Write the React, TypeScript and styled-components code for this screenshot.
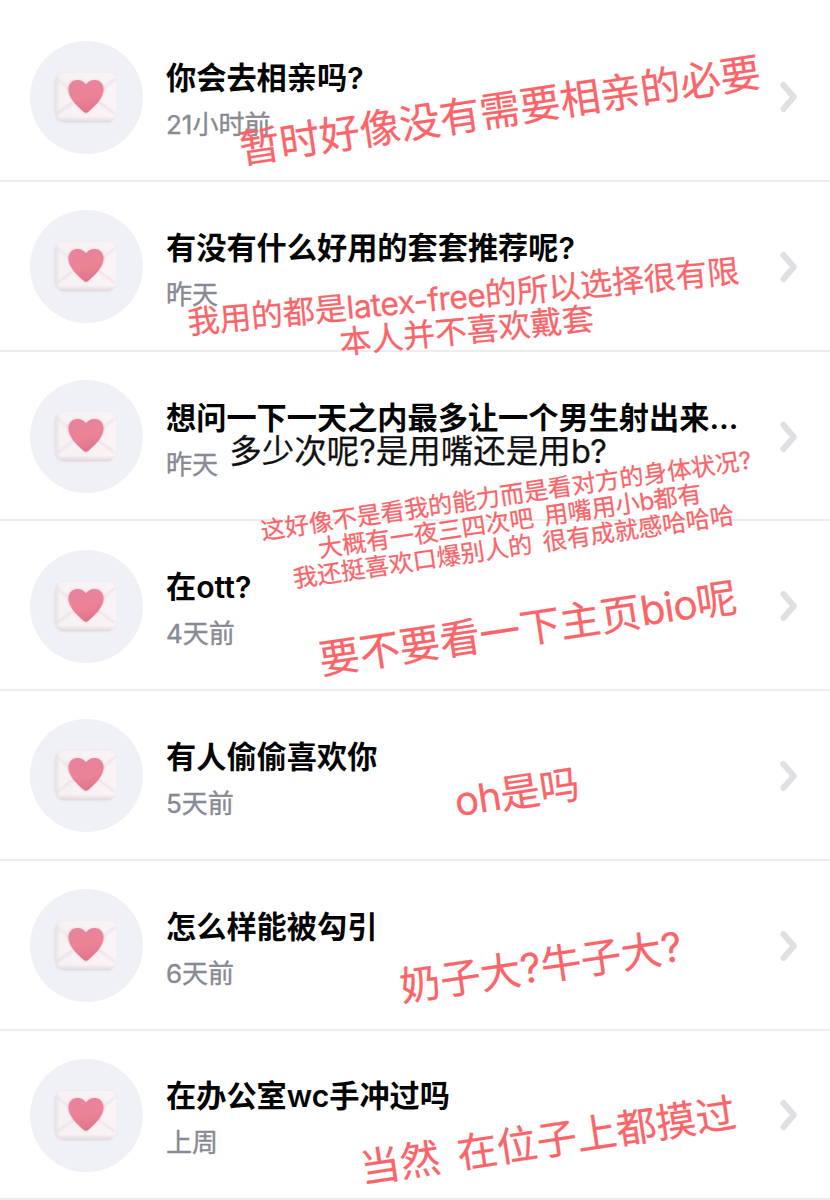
import React from "react";
import styled, { createGlobalStyle } from "styled-components";

const GlobalStyle = createGlobalStyle`
  * { box-sizing: border-box; }
  body { margin: 0; background: #fff; }
`;

const Page = styled.main`
  position: relative;
  width: 830px;
  height: 1200px;
  padding-top: 12.4px;
  overflow: hidden;
  background: #fff;
  font-family: Inter, "Noto Sans CJK SC", sans-serif;
`;

const Row = styled.article`
  display: flex;
  align-items: center;
  height: 169.7px;
  padding: 2px 30px 0 30px;
  border-bottom: 2px solid #ededef;
`;

const Avatar = styled.div`
  flex: none;
  width: 113px;
  height: 113px;
  border-radius: 50%;
  background: #eff1f6;
`;

const Copy = styled.div`
  flex: 1;
  min-width: 0;
  margin-left: 23px;
  padding-top: 9px;
`;

const Title = styled.h2`
  margin: 0;
  font-size: 30.2px;
  line-height: 46px;
  font-weight: 600;
  color: #050505;
  white-space: nowrap;
`;

const Time = styled.p`
  margin: 1px 0 0;
  font-size: 26px;
  line-height: 46px;
  color: #878a93;
  white-space: nowrap;
  -webkit-text-stroke: 0.4px #878a93;
`;

const Chevron = styled.svg`
  flex: none;
  width: 20px;
  height: 32px;
`;

const Note = styled.div<{ $x: number; $y: number; $size: number; $angle: number; $line?: number; $color?: string }>`
  position: absolute;
  left: ${(p) => p.$x}px;
  top: ${(p) => p.$y}px;
  transform: translate(-50%, -50%) rotate(${(p) => -p.$angle}deg);
  font-size: ${(p) => p.$size}px;
  line-height: ${(p) => p.$line ?? 48}px;
  color: ${(p) => p.$color ?? "#fb6468"};
  -webkit-text-stroke: 0.25px ${(p) => p.$color ?? "#fb6468"};
  text-align: center;
  white-space: pre;
  word-spacing: -0.06em;
`;

const Latin = styled.span`
  letter-spacing: -0.02em;
`;

const Letter = () => (
  <svg width="113" height="113" viewBox="0 0 113 113">
    <defs>
      <linearGradient id="paper" x1="0" y1="0" x2="1" y2="0">
        <stop offset="0" stopColor="#e6e0e2" />
        <stop offset="0.08" stopColor="#f6f1f3" />
        <stop offset="1" stopColor="#fbf3f6" />
      </linearGradient>
      <linearGradient id="base" x1="0" y1="0" x2="0" y2="1">
        <stop offset="0.88" stopColor="#e0d7d9" stopOpacity="0" />
        <stop offset="1" stopColor="#e0d7d9" />
      </linearGradient>
      <linearGradient id="heart" x1="0" y1="0" x2="0.2" y2="1">
        <stop offset="0" stopColor="#e883a0" />
        <stop offset="0.6" stopColor="#ec8395" />
        <stop offset="1" stopColor="#e0758d" />
      </linearGradient>
      <filter id="soft" x="-20%" y="-20%" width="140%" height="140%">
        <feGaussianBlur stdDeviation="0.8" />
      </filter>
    </defs>
    <rect x="24.8" y="31.7" width="61" height="50" rx="9.5" fill="#d5d0d4" opacity="0.5" filter="url(#soft)" />
    <rect x="25" y="31.5" width="61.5" height="49.8" rx="9.5" fill="url(#paper)" />
    <rect x="25" y="31.5" width="61.5" height="49.8" rx="9.5" fill="url(#base)" />
    <path d="M27 38 L51 58 Q56 62 61 58 L85 38" fill="none" stroke="#e5dce0" strokeWidth="1.4" filter="url(#soft)" />
    <path d="M27 73 L46 59 M85 73 L66 59" fill="none" stroke="#e2d9dc" strokeWidth="1.5" filter="url(#soft)" />
    <path d="M56 73 C52 69 38 58 38 48.5 C38 38 50.5 36 56 43.5 C61.5 36 74 38 74 48.5 C74 58 60 69 56 73Z" fill="#c9a8b2" opacity="0.6" filter="url(#soft)" />
    <path d="M58.4 70.7 Q56 72.6 53.6 70.7 C47 65 38.5 57 38.5 48.5 C38.5 38 50.5 36 56 43.2 C61.5 36 73.5 38 73.5 48.5 C73.5 57 65 65 58.4 70.7Z" fill="url(#heart)" />
  </svg>
);

const messages = [
  { title: "你会去相亲吗?", time: "21小时前" },
  { title: "有没有什么好用的套套推荐呢?", time: "昨天" },
  { title: "想问一下一天之内最多让一个男生射出来…", time: "昨天" },
  { title: "在ott?", time: "4天前" },
  { title: "有人偷偷喜欢你", time: "5天前" },
  { title: "怎么样能被勾引", time: "6天前" },
  { title: "在办公室wc手冲过吗", time: "上周" },
];

const notes = [
  { text: "暂时好像没有需要相亲的必要", x: 500, y: 111, size: 40.5, angle: 8.5 },
  { text: "我用的都是latex-free的所以选择很有限\n本人并不喜欢戴套", x: 465, y: 314, size: 31.9, angle: 5.4, line: 34 },
  { text: "多少次呢?是用嘴还是用b?", x: 418, y: 452, size: 32.5, angle: 0, color: "#111" },
  {
    text: "这好像不是看我的能力而是看对方的身体状况?\n大概有一夜三四次吧  用嘴用小b都有\n我还挺喜欢口爆别人的  很有成就感哈哈哈",
    x: 509.5, y: 522, size: 24.15, angle: 8.3, line: 26.2,
  },
  { text: "要不要看一下主页bio呢", x: 528, y: 628.5, size: 40.6, angle: 8.6 },
  { text: "oh是吗", x: 516.5, y: 793, size: 39.8, angle: 8.6 },
  { text: "奶子大?牛子大?", x: 540.5, y: 967, size: 40.5, angle: 8.3 },
  { text: "当然  在位子上都摸过", x: 548, y: 1141, size: 40.2, angle: 8.6 },
];

const renderText = (text: string) =>
  text.split(/([a-z-]+)/).map((part, i) => (i % 2 ? <Latin key={i}>{part}</Latin> : part));

export default function App() {
  return (
    <Page>
      <GlobalStyle />
      {messages.map((m) => (
        <Row key={m.title}>
          <Avatar><Letter /></Avatar>
          <Copy>
            <Title>{m.title}</Title>
            <Time>{m.time}</Time>
          </Copy>
          <Chevron viewBox="0 0 20 32">
            <path d="M3.4 4 L13.8 16 L3.4 28" fill="none" stroke="#dfe0e3" strokeWidth="6" strokeLinecap="round" strokeLinejoin="round" />
          </Chevron>
        </Row>
      ))}
      {notes.map((n) => (
        <Note key={n.text} $x={n.x} $y={n.y} $size={n.size} $angle={n.angle} $line={n.line} $color={n.color}>
          {renderText(n.text)}
        </Note>
      ))}
    </Page>
  );
}
